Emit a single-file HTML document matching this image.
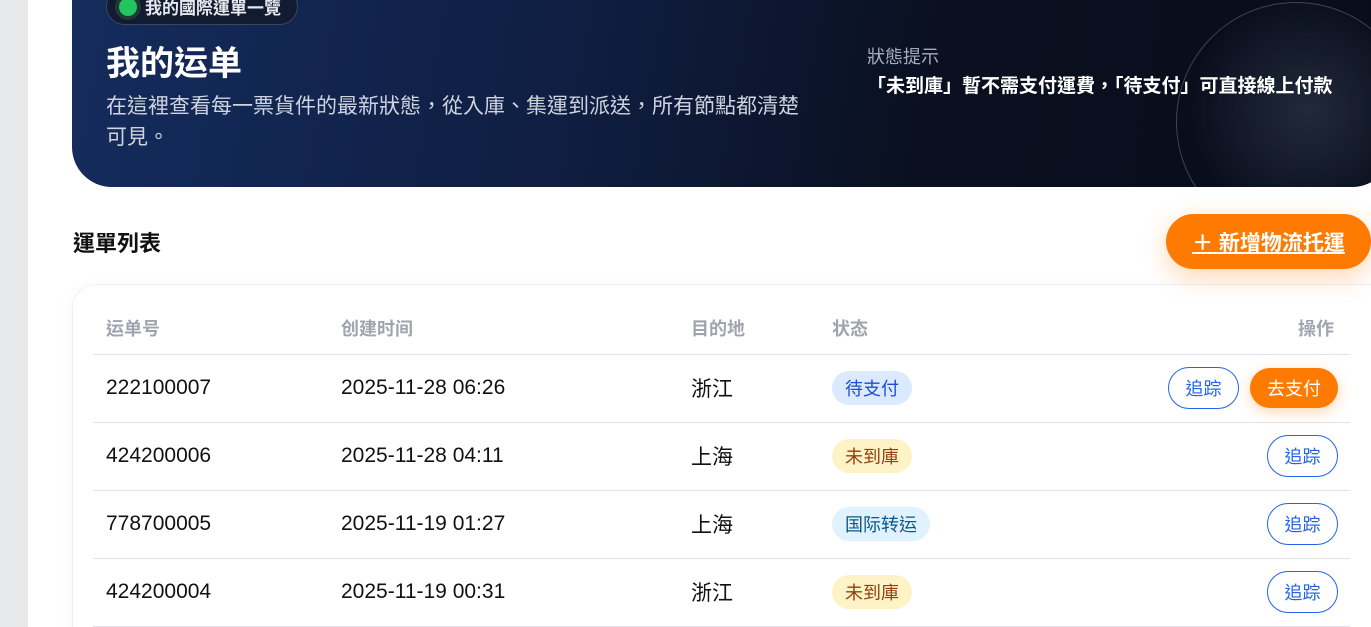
<!DOCTYPE html>
<html><head><meta charset="utf-8"><style>
*{margin:0;padding:0;box-sizing:border-box}
html,body{width:1371px;height:627px;overflow:hidden}
body{background:#fff;font-family:"Liberation Sans","Noto Sans CJK TC",sans-serif;position:relative}
.side{position:absolute;left:0;top:0;width:28px;height:627px;background:#e8e9eb}
.banner{position:absolute;left:72px;top:-60px;width:1320px;height:247px;border-radius:0 0 40px 40px;background:linear-gradient(100deg,#142c5e 0%,#0f1d40 40%,#0a1020 65%,#080d1a 100%);overflow:hidden}
.circle{position:absolute;left:1104px;top:62px;width:240px;height:240px;border-radius:50%;border:1px solid rgba(255,255,255,.22);background:radial-gradient(circle at 55% 45%,rgba(60,70,90,.5),rgba(10,15,28,0) 65%)}
.pill{position:absolute;left:106px;top:-12px;height:37px;padding:0 16px 0 12px;border-radius:19px;background:#121b30;border:1px solid #3a4560;color:#e6e8ee;font-size:17px;font-weight:bold;display:flex;align-items:center;gap:8px}
.dot{width:18px;height:18px;border-radius:50%;background:#22c55e;box-shadow:0 0 0 4px #1e3a34}
h1{position:absolute;left:106px;top:36px;color:#fff;font-size:34px;font-weight:bold}
.desc{position:absolute;left:106px;top:91px;width:760px;color:#cdd3df;font-size:21px;line-height:31px;white-space:nowrap}
.tip1{position:absolute;left:867px;top:43px;color:#a5adbd;font-size:18px}
.tip2{position:absolute;left:867px;top:71px;color:#fff;font-size:19px;font-weight:bold;white-space:nowrap}
.title{position:absolute;left:73px;top:226px;font-size:22px;font-weight:bold;color:#111}
.add{position:absolute;left:1166px;top:214px;width:205px;height:55px;border-radius:28px;background:#ff7a00;color:#fff;font-size:21px;font-weight:bold;text-decoration:underline;display:flex;align-items:center;justify-content:center;box-shadow:0 8px 26px rgba(255,122,0,.3)}
.card{position:absolute;left:72px;top:284px;width:1320px;height:343px;border-radius:24px 24px 0 0;border:1px solid #eef0f3;border-bottom:none;background:#fff;box-shadow:0 4px 20px rgba(0,0,0,.04)}
.th{position:absolute;top:315px;font-size:18px;font-weight:bold;color:#a0a4ae}
.line{position:absolute;left:93px;width:1257px;height:1px;background:#e2e3ea}
.td{position:absolute;font-size:21px;color:#111}
.badge{position:absolute;left:832px;height:34px;padding:0 13px;border-radius:17px;font-size:18px;display:flex;align-items:center}
.b1{background:#dbeafe;color:#1d4ed8}.b2{background:#fef3c7;color:#92400e}.b3{background:#e0f2fe;color:#075985}
.trk{position:absolute;width:71px;height:42px;border:1px solid #2563eb;border-radius:21px;color:#2563eb;font-size:18px;display:flex;align-items:center;justify-content:center;background:#fff}
.pay{position:absolute;left:1250px;top:368px;width:88px;height:40px;border-radius:20px;background:#ff7a00;color:#fff;font-size:18px;display:flex;align-items:center;justify-content:center;box-shadow:0 4px 14px rgba(255,122,0,.3)}
</style></head><body>
<div class="side"></div>
<div class="banner"><div class="circle"></div></div>
<div class="pill"><span class="dot"></span>我的國際運單一覽</div>
<h1>我的运单</h1>
<div class="desc">在這裡查看每一票貨件的最新狀態，從入庫、集運到派送，所有節點都清楚<br>可見。</div>
<div class="tip1">狀態提示</div>
<div class="tip2">「未到庫」暫不需支付運費，「待支付」可直接線上付款</div>
<div class="title">運單列表</div>
<div class="card"></div>
<div class="add">＋ 新增物流托運</div>
<div class="th" style="left:106px">运单号</div>
<div class="th" style="left:341px">创建时间</div>
<div class="th" style="left:691px">目的地</div>
<div class="th" style="left:832px">状态</div>
<div class="th" style="left:1298px">操作</div>
<div class="line" style="top:354px"></div>
<div class="line" style="top:422px"></div>
<div class="line" style="top:490px"></div>
<div class="line" style="top:558px"></div>
<div class="line" style="top:626px"></div>

<div class="td" style="left:106px;top:376px">222100007</div>
<div class="td" style="left:341px;top:376px">2025-11-28 06:26</div>
<div class="td" style="left:691px;top:373px">浙江</div>
<div class="badge b1" style="top:371px">待支付</div>
<div class="trk" style="left:1168px;top:367px">追踪</div>
<div class="pay">去支付</div>

<div class="td" style="left:106px;top:444px">424200006</div>
<div class="td" style="left:341px;top:444px">2025-11-28 04:11</div>
<div class="td" style="left:691px;top:441px">上海</div>
<div class="badge b2" style="top:439px">未到庫</div>
<div class="trk" style="left:1267px;top:435px">追踪</div>

<div class="td" style="left:106px;top:512px">778700005</div>
<div class="td" style="left:341px;top:512px">2025-11-19 01:27</div>
<div class="td" style="left:691px;top:509px">上海</div>
<div class="badge b3" style="top:507px">国际转运</div>
<div class="trk" style="left:1267px;top:503px">追踪</div>

<div class="td" style="left:106px;top:580px">424200004</div>
<div class="td" style="left:341px;top:580px">2025-11-19 00:31</div>
<div class="td" style="left:691px;top:577px">浙江</div>
<div class="badge b2" style="top:575px">未到庫</div>
<div class="trk" style="left:1267px;top:571px">追踪</div>
</body></html>
